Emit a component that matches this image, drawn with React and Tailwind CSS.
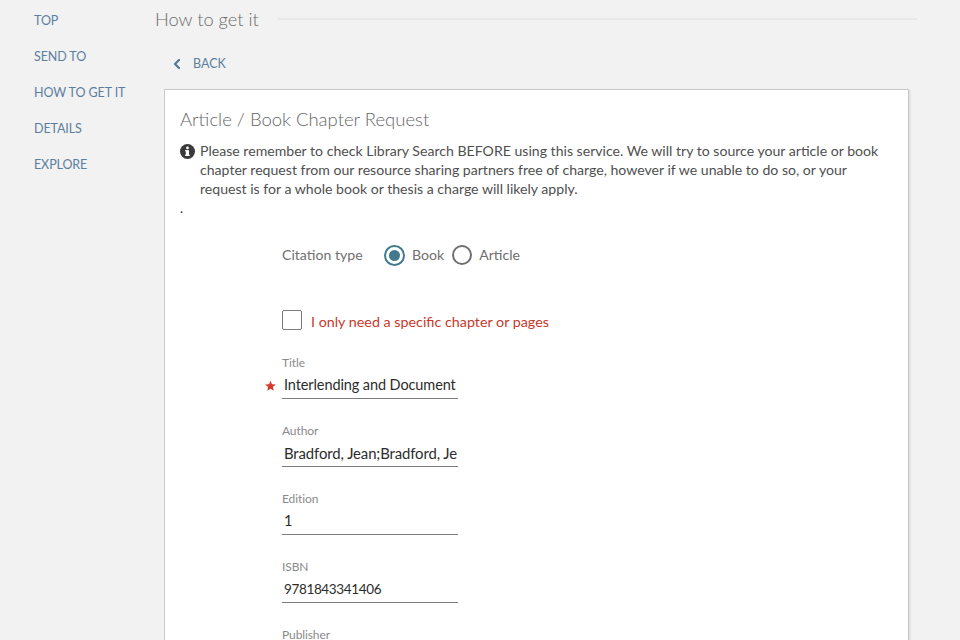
import React from "react";
import { ChevronLeft } from "lucide-react";

function Field({ label, value, required, valueClass = "text-[14.5px] tracking-[-0.1px]" }) {
  return (
    <div className="relative w-[176px] h-[68px]">
      <div className="h-[15px] text-[12px] leading-[15px] text-[#8a8a8a] tracking-[-0.1px]">{label}</div>
      {value !== undefined && (
        <div className={`mt-[4px] h-[25px] border-b border-[#7d7d7d] pl-[2px] leading-[22px] text-[#2c2c2c] whitespace-nowrap ${valueClass}`}>
          {value}
        </div>
      )}
      {required && (
        <svg className="absolute left-[-17px] top-[25px] w-[11px] h-[11px]" viewBox="0 0 24 24">
          <path d="M12 1.5l3.2 7.6 8.3.7-6.3 5.4 1.9 8.1L12 18.9l-7.1 4.4 1.9-8.1L.5 9.8l8.3-.7z" fill="#d9392b" />
        </svg>
      )}
    </div>
  );
}

const nav = ["TOP", "SEND TO", "HOW TO GET IT", "DETAILS", "EXPLORE"];

export default function App() {
  return (
    <div className="h-[640px] w-[960px] overflow-hidden bg-[#f2f2f2] flex font-['Lato','Noto_Sans',sans-serif]">
      <nav className="w-[155px] shrink-0 pl-[34px] pt-[3px] flex flex-col">
        {nav.map((n) => (
          <div key={n} className="h-[36px] leading-[36px] text-[12.5px] tracking-[-0.1px] text-[#5c7f9f] whitespace-nowrap">{n}</div>
        ))}
      </nav>
      <main className="flex-1 min-w-0">
        <div className="flex items-center h-[38px] pr-[43px]">
          <h2 className="text-[18.3px] font-light text-[#6b6b6b] leading-[38px] whitespace-nowrap">How to get it</h2>
          <div className="ml-[19px] flex-1 h-[2px] bg-[#e8e8e8]"></div>
        </div>
        <div className="flex items-center h-[50px] pl-[14px] mb-[2px] pt-[1px]">
          <ChevronLeft className="w-[16px] h-[16px] text-[#4f7796]" strokeWidth={3.2} />
          <span className="ml-[8px] mt-[2px] text-[12.5px] text-[#5c7f9f]">BACK</span>
        </div>
        <section className="ml-[9px] w-[745px] h-[560px] mt-[-1px] bg-white border border-[#c9c9c9] shadow-[1px_1px_2px_rgba(0,0,0,0.12)] px-[15px] pt-[16px]">
          <h3 className="text-[18.5px] font-light leading-[26px] text-[#666666]">Article / Book Chapter Request</h3>
          <div className="mt-[9px] flex items-start">
            <svg className="w-[15px] h-[15px] mt-[3px] mr-[5px] shrink-0" viewBox="0 0 16 16">
              <circle cx="8" cy="8" r="8" fill="#3a3a3a" />
              <rect x="6.2" y="6.6" width="3.4" height="5.8" fill="#fff" />
              <rect x="5.4" y="6.6" width="3" height="1.2" fill="#fff" />
              <rect x="5.4" y="11.4" width="5" height="1.3" fill="#fff" />
              <circle cx="8" cy="4.2" r="1.5" fill="#fff" />
            </svg>
            <p className="text-[14.1px] leading-[19px] text-[#4f4f4f] w-[690px]">
              Please remember to check Library Search BEFORE using this service. We will try to source your article or book chapter request from our resource sharing partners free of charge, however if we unable to do so, or your request is for a whole book or thesis a charge will likely apply.
            </p>
          </div>
          <div className="text-[13px] leading-[19px] text-[#333] mt-[1px]">.</div>

          <div className="ml-[102px]">
            <div className="flex items-center mt-[26px] h-[22px]">
              <span className="text-[14.1px] text-[#6f6f6f] w-[102px]">Citation type</span>
              <span className="w-[21px] h-[21px] rounded-full border-2 border-[#43798c] flex items-center justify-center">
                <span className="w-[11px] h-[11px] rounded-full bg-[#43798c]"></span>
              </span>
              <span className="ml-[7px] text-[14.1px] text-[#6f6f6f]">Book</span>
              <span className="ml-[8px] w-[20px] h-[20px] rounded-full border-2 border-[#6f6f6f]"></span>
              <span className="ml-[7px] text-[14.1px] text-[#6f6f6f]">Article</span>
            </div>
            <div className="flex items-center mt-[44px] h-[20px]">
              <span className="w-[20px] h-[20px] rounded-[2px] border border-[#7d7d7d]"></span>
              <span className="ml-[9px] mt-[4px] text-[14.3px] text-[#c8372b]">I only need a specific chapter or pages</span>
            </div>
            <div className="mt-[25px]">
              <Field label="Title" value="Interlending and Document" required />
              <Field label="Author" value="Bradford, Jean;Bradford, Je" valueClass="text-[14.9px] tracking-[-0.1px]" />
              <Field label="Edition" value="1" />
              <Field label="ISBN" value="9781843341406" valueClass="text-[13.5px] tracking-[-0.36px]" />
              <Field label="Publisher" />
            </div>
          </div>
        </section>
      </main>
    </div>
  );
}
